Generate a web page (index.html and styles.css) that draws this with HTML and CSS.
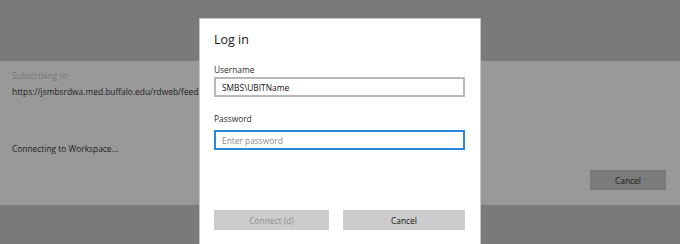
FILE: index.html
```html
<!DOCTYPE html>
<html lang="en">
<head>
<meta charset="utf-8">
<title>Log in</title>
<link rel="stylesheet" href="styles.css">
</head>
<body>
<div class="app">
  <div class="header"></div>
  <div class="panel">
    <div class="sub-label">Subscribing to</div>
    <div class="sub-url">https://jsmbsrdwa.med.buffalo.edu/rdweb/feed/webfeed.aspx</div>
    <div class="status">Connecting to Workspace...</div>
    <div class="panel-actions">
      <button class="btn-dim" type="button">Cancel</button>
    </div>
  </div>
  <div class="footer"></div>

  <div class="dialog">
    <div class="dialog-title">Log in</div>
    <label class="field-label" for="user">Username</label>
    <input class="field" id="user" type="text" value="SMBS\UBITName">
    <label class="field-label pw" for="pw">Password</label>
    <input class="field focused" id="pw" type="password" placeholder="Enter password">
    <div class="dialog-actions">
      <button class="btn btn-connect" type="button" disabled>Connect (d)</button>
      <button class="btn btn-cancel" type="button">Cancel</button>
    </div>
  </div>
</div>
</body>
</html>
```
FILE: styles.css
```css
* { box-sizing: border-box; }
html, body {
  margin: 0;
  padding: 0;
}
body {
  width: 680px;
  height: 244px;
  overflow: hidden;
  background: #7a7a7a;
  font-family: "Open Sans", "Noto Sans", sans-serif;
  font-size: 8.4px;
}
.app {
  position: relative;
  width: 680px;
  height: 244px;
  display: flex;
  flex-direction: column;
}
.header {
  height: 61px;
  background: #7a7a7a;
}
.panel {
  height: 144px;
  background: #999999;
  padding: 7px 14px 0 12px;
  display: flex;
  flex-direction: column;
}
.sub-label {
  line-height: 16px;
  color: #777777;
}
.sub-url {
  line-height: 16px;
  color: #1e1e1e;
  white-space: nowrap;
}
.status {
  margin-top: 41px;
  line-height: 16px;
  color: #1e1e1e;
}
.panel-actions {
  margin-top: 13px;
  display: flex;
  justify-content: flex-end;
}
.btn-dim {
  width: 76px;
  height: 20px;
  margin: 0;
  padding: 0;
  border: 1px solid #777777;
  background: #7b7b7b;
  color: #1a1a1a;
  font: inherit;
}
.footer {
  flex: 1;
  background: #7a7a7a;
}
.dialog {
  position: absolute;
  left: 199px;
  top: 18px;
  width: 282px;
  height: 226px;
  background: #ffffff;
  border: 1px solid #c6c6c6;
  border-bottom: none;
  padding: 12px 14px 0 14px;
  display: flex;
  flex-direction: column;
}
.dialog-title {
  font-size: 12.5px;
  line-height: 18px;
  color: #1a1a1a;
}
.field-label {
  margin-top: 15px;
  line-height: 12px;
  color: #2b2b2b;
}
.field-label.pw {
  margin-top: 16px;
}
.field {
  display: block;
  width: 251px;
  height: 20px;
  margin: 1px 0 0 0;
  padding: 0 6px;
  border: 2px solid #b8b8b8;
  background: #fff;
  font: inherit;
  color: #111;
  outline: none;
}
.field.focused {
  margin-top: 5px;
  border-color: #2b88d8;
}
.field::placeholder {
  color: #8a8a8a;
}
.dialog-actions {
  margin-top: 60px;
  display: flex;
  gap: 14px;
}
.btn {
  height: 20px;
  margin: 0;
  padding: 0;
  border: none;
  background: #cccccc;
  font: inherit;
}
.btn-connect {
  width: 115px;
  color: #8c8c8c;
}
.btn-cancel {
  width: 122px;
  color: #111;
}
```
